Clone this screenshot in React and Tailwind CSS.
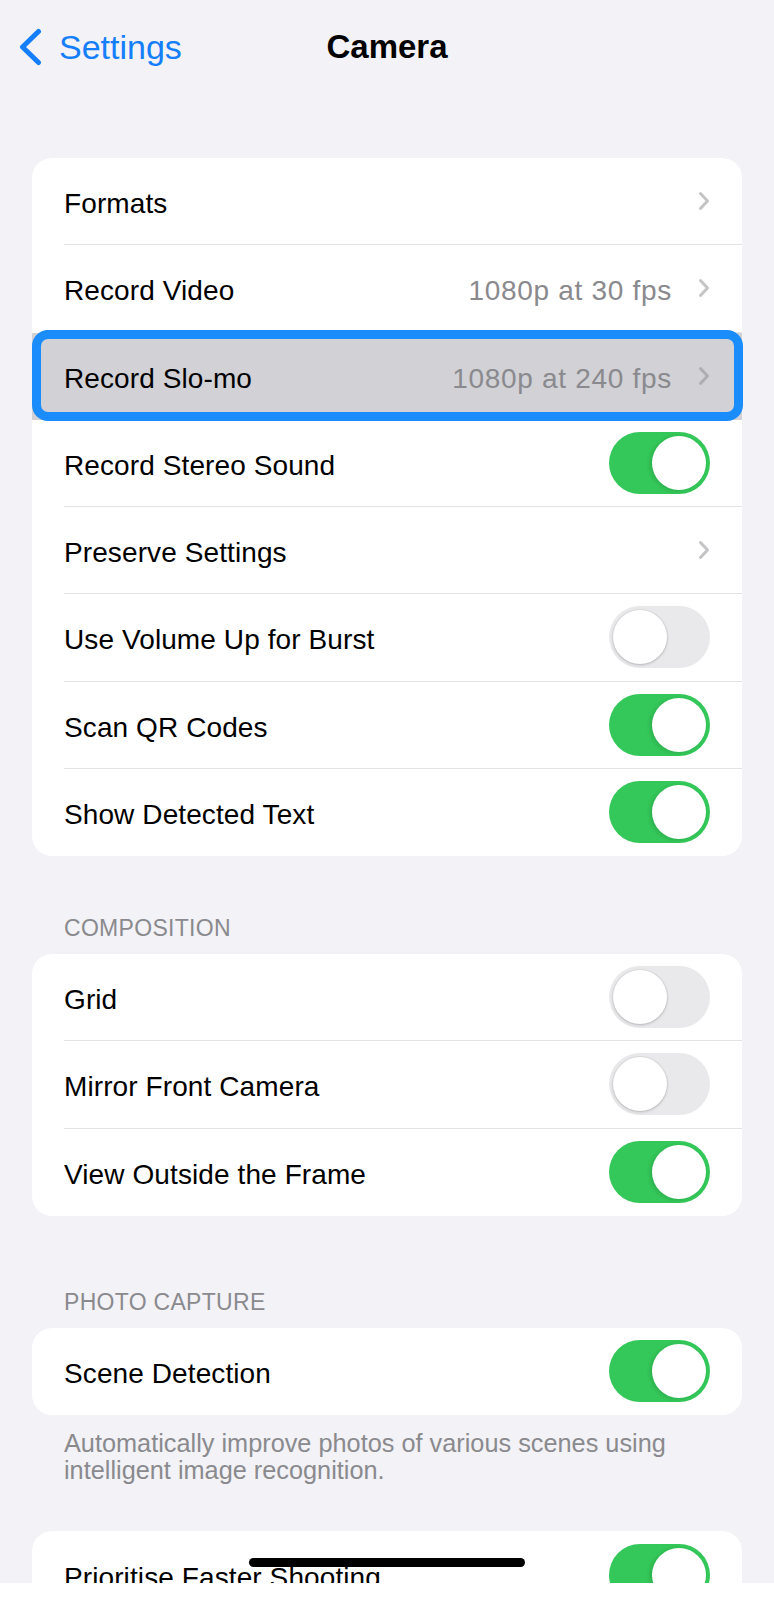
import React from "react";

const Chevron = ({ color = "#c4c4c7" }) => (
  <svg width="12" height="20" viewBox="0 0 12 20" className="shrink-0">
    <path d="M2.5 2.5 L9.5 10 L2.5 17.5" fill="none" stroke={color} strokeWidth="3" strokeLinecap="round" strokeLinejoin="round" />
  </svg>
);

const Toggle = ({ on }) =>
  on ? (
    <div className="w-[101px] h-[62px] rounded-full bg-[#34c759] flex items-center justify-end pr-[4px] shrink-0">
      <div className="w-[54px] h-[54px] rounded-full bg-white shadow-[-2px_1px_4px_rgba(0,0,0,0.12)]" />
    </div>
  ) : (
    <div className="w-[101px] h-[62px] rounded-full bg-[#e9e9eb] flex items-center justify-start pl-[4px] shrink-0">
      <div className="w-[54px] h-[54px] rounded-full bg-white shadow-[0_1px_3px_rgba(0,0,0,0.2),0_0_0_1px_rgba(0,0,0,0.04)]" />
    </div>
  );

const Row = ({ label, value, chevron, toggle, last, highlight }) => (
  <div className={`relative h-[87.25px] pl-[32px] flex ${highlight ? "bg-[#d1d1d6]" : ""}`}>
    <div
      className={`flex-1 h-full flex items-center pr-[32px] ${last || highlight ? "" : "border-b border-[#e3e3e7]"}`}
    >
      <span className="text-[28px] pt-[6px] text-black flex-1 whitespace-nowrap tracking-[0.1px]">{label}</span>
      {value && (
        <span className="text-[28px] pt-[6px] text-[#8a8a8e] mr-[26px] whitespace-nowrap tracking-[0.7px]">{value}</span>
      )}
      {chevron && <Chevron color={highlight ? "#aeaeb2" : "#c4c4c7"} />}
      {toggle !== undefined && <Toggle on={toggle} />}
    </div>
    {highlight && (
      <div className="absolute left-0 -right-px -top-[3px] -bottom-px border-[9px] border-[#1a8cfb] rounded-[16px] pointer-events-none" />
    )}
  </div>
);

const Card = ({ children }) => <div className="mx-[32px] bg-white rounded-[20px]">{children}</div>;

const Header = ({ children, pt }) => (
  <div className={`${pt} pb-[12px] px-[64px] text-[23px] leading-[28px] text-[#8a8a8e] tracking-[0.3px]`}>{children}</div>
);

export default function App() {
  return (
    <div className="bg-white w-[774px] min-h-[1600px]">
      <div
        className="relative w-[774px] h-[1583px] bg-[#f2f2f7] overflow-hidden"
        style={{ fontFamily: '"Liberation Sans", Arial, sans-serif' }}
      >
        {/* Nav bar */}
        <div className="grid grid-cols-3 h-[94px] items-center">
          <div className="flex items-center pl-[18px]">
            <svg width="24" height="38" viewBox="0 0 24 38" className="mr-[17px]">
              <path d="M20.5 3.5 L4.5 19 L20.5 34.5" fill="none" stroke="#157efb" strokeWidth="5" strokeLinecap="round" strokeLinejoin="round" />
            </svg>
            <span className="text-[34px] text-[#157efb]">Settings</span>
          </div>
          <div className="text-center text-[33px] font-bold text-black">Camera</div>
          <div />
        </div>

        <div className="h-[64px]" />

        <Card>
          <Row label="Formats" chevron />
          <Row label="Record Video" value="1080p at 30 fps" chevron />
          <Row label="Record Slo-mo" value="1080p at 240 fps" chevron highlight />
          <Row label="Record Stereo Sound" toggle={true} />
          <Row label="Preserve Settings" chevron />
          <Row label="Use Volume Up for Burst" toggle={false} />
          <Row label="Scan QR Codes" toggle={true} />
          <Row label="Show Detected Text" toggle={true} last />
        </Card>

        <Header pt="pt-[58px]">COMPOSITION</Header>
        <Card>
          <Row label="Grid" toggle={false} />
          <Row label="Mirror Front Camera" toggle={false} />
          <Row label="View Outside the Frame" toggle={true} last />
        </Card>

        <Header pt="pt-[72px]">PHOTO CAPTURE</Header>
        <Card>
          <Row label="Scene Detection" toggle={true} last />
        </Card>
        <div className="pt-[15px] pl-[64px] pr-[40px] text-[25.3px] leading-[27px] text-[#8a8a8e]">
          Automatically improve photos of various scenes using intelligent image recognition.
        </div>

        <div className="h-[47px]" />
        <Card>
          <Row label="Prioritise Faster Shooting" toggle={true} last />
        </Card>

        {/* Home indicator */}
        <div className="absolute left-[249px] top-[1558px] w-[276px] h-[9px] rounded-full bg-black" />
      </div>
    </div>
  );
}
